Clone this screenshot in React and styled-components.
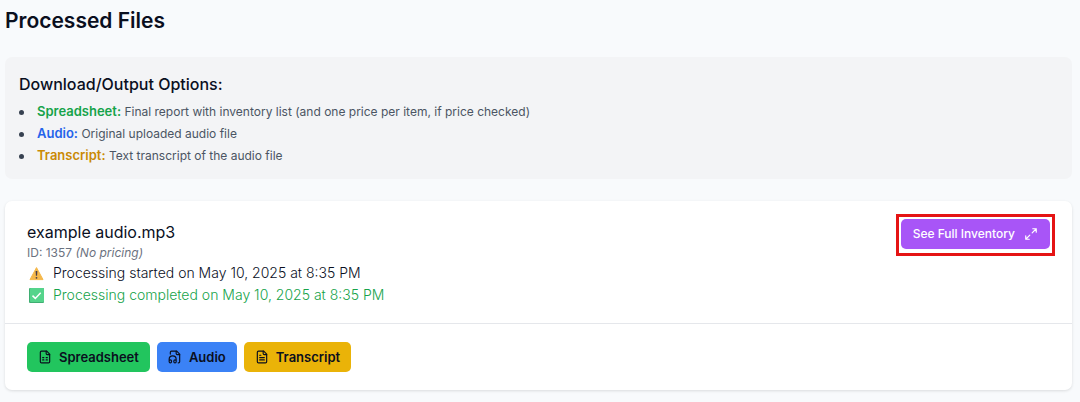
import React from "react";
import styled, { createGlobalStyle } from "styled-components";

const GlobalStyle = createGlobalStyle`
  *, *::before, *::after { box-sizing: border-box; }
  body {
    margin: 0;
    background: #f8fafc;
    color: #0a0f1e;
    font-family: Inter, "Liberation Sans", sans-serif;
    font-size: 14px;
    line-height: 22px;
  }
  h1, h2, h3, p, ul { margin: 0; }
`;

const Page = styled.main`
  padding: 8px 8px 12px 5px;
`;

const PageTitle = styled.h1`
  font-size: 21px;
  font-weight: 600;
  line-height: 26px;
  margin-bottom: 23px;
`;

const OptionsPanel = styled.section`
  background: #f3f4f6;
  border-radius: 7px;
  padding: 14px 14px 12px;
  margin-bottom: 22px;
`;

const OptionsTitle = styled.h2`
  font-size: 16px;
  font-weight: 500;
  line-height: 26px;
  margin-bottom: 4px;
`;

const OptionsList = styled.ul`
  list-style: none;
  padding: 0;
  color: #4b5563;
`;

const Option = styled.li`
  display: flex;
  align-items: center;
  font-size: 12px;
  line-height: 22px;
  &::before {
    content: "";
    width: 5px;
    height: 5px;
    margin-right: 13px;
    border-radius: 50%;
    background: #374151;
  }
`;

const OptionName = styled.strong`
  font-size: 13px;
  font-weight: 600;
  line-height: 16px;
  color: ${(p) => p.$color};
`;

const Card = styled.article`
  background: #fff;
  border-radius: 7px;
  box-shadow: 0 1px 3px rgba(0, 0, 0, 0.12);
`;

const CardHeader = styled.header`
  display: flex;
  justify-content: space-between;
  align-items: flex-start;
  padding: 13px 17px 17px 22px;
  border-bottom: 1px solid #e5e7eb;
`;

const FileInfo = styled.div`
  padding-top: 7px;
`;

const FileName = styled.h3`
  font-size: 16px;
  font-weight: 400;
  line-height: 22px;
`;

const FileMeta = styled.p`
  font-size: 12px;
  line-height: 19px;
  color: #6b7280;
`;

const StatusLine = styled.p`
  display: flex;
  align-items: center;
  gap: 9px;
  font-weight: 300;
  color: ${(p) => p.$color};
  svg { margin-left: 2px; }
`;

const Highlight = styled.div`
  border: 3px solid #e51414;
  padding: 2px 2px 4px;
`;

const Button = styled.button`
  display: inline-flex;
  align-items: center;
  gap: 7px;
  height: 30px;
  padding: 0 11px;
  border: 0;
  border-radius: 5px;
  font: 600 13px/20px Inter, "Liberation Sans", sans-serif;
  color: #0a0f1e;
  background: ${(p) => p.$bg};
  white-space: nowrap;
  cursor: pointer;
`;

const InventoryButton = styled(Button)`
  gap: 9px;
  padding: 0 12px;
  font-size: 12px;
  font-weight: 500;
  color: #fff;
`;

const CardActions = styled.footer`
  display: flex;
  gap: 7px;
  padding: 18px 22px;
`;

const Icon = ({ children }) => (
  <svg width="14" height="14" viewBox="0 0 24 24" fill="none" stroke="currentColor" strokeWidth="2" strokeLinecap="round" strokeLinejoin="round" aria-hidden="true">
    {children}
  </svg>
);

const FileOutline = () => (
  <>
    <path d="M15 2H6a2 2 0 0 0-2 2v16a2 2 0 0 0 2 2h12a2 2 0 0 0 2-2V7Z" />
    <path d="M14 2v4a2 2 0 0 0 2 2h4" />
  </>
);

const SheetIcon = () => (
  <Icon>
    <FileOutline />
    <path d="M8 13h2M14 13h2M8 17h2M14 17h2" />
  </Icon>
);

const AudioIcon = () => (
  <Icon>
    <path d="M17.5 22h.5a2 2 0 0 0 2-2V7l-5-5H6a2 2 0 0 0-2 2v3" />
    <path d="M14 2v4a2 2 0 0 0 2 2h4" />
    <path d="M2 19a2 2 0 1 1 4 0v1a2 2 0 1 1-4 0v-4a6 6 0 0 1 12 0v4a2 2 0 1 1-4 0v-1a2 2 0 1 1 4 0" />
  </Icon>
);

const TextIcon = () => (
  <Icon>
    <FileOutline />
    <path d="M10 9H8M16 13H8M16 17H8" />
  </Icon>
);

const ExpandIcon = () => (
  <Icon>
    <path d="M15 3h6v6M21 3l-7 7M3 21l7-7M9 21H3v-6" />
  </Icon>
);

const WarningIcon = () => (
  <svg width="15" height="15" viewBox="0 0 15 15" aria-hidden="true">
    <path d="M7.5 1.6 14 13.6H1Z" fill="#f5b84b" stroke="#f5b84b" strokeWidth="1" strokeLinejoin="round" />
    <path d="M6.6 5h1.8L8.1 9.8H6.9Z" fill="#4a3d48" />
    <circle cx="7.5" cy="11.8" r="0.9" fill="#4a3d48" />
  </svg>
);

const CheckIcon = () => (
  <svg width="15" height="15" viewBox="0 0 15 15" aria-hidden="true">
    <rect width="15" height="15" rx="1" fill="#3fae72" />
    <rect x="1" width="14" height="14" rx="1" fill="#55d48b" />
    <path d="m3.5 7.6 2.8 2.8 5.4-5.6" fill="none" stroke="#fff" strokeWidth="1.5" />
  </svg>
);

const options = [
  { name: "Spreadsheet:", color: "#16a34a", text: "Final report with inventory list (and one price per item, if price checked)" },
  { name: "Audio:", color: "#2563eb", text: "Original uploaded audio file" },
  { name: "Transcript:", color: "#ca8a04", text: "Text transcript of the audio file" },
];

export default function App() {
  return (
    <>
      <GlobalStyle />
      <Page>
        <PageTitle>Processed Files</PageTitle>
        <OptionsPanel>
          <OptionsTitle>Download/Output Options:</OptionsTitle>
          <OptionsList>
            {options.map((o) => (
              <Option key={o.name}>
                <p>
                  <OptionName $color={o.color}>{o.name}</OptionName> {o.text}
                </p>
              </Option>
            ))}
          </OptionsList>
        </OptionsPanel>
        <Card>
          <CardHeader>
            <FileInfo>
              <FileName>example audio.mp3</FileName>
              <FileMeta>ID: 1357 <em>(No pricing)</em></FileMeta>
              <StatusLine><WarningIcon />Processing started on May 10, 2025 at 8:35 PM</StatusLine>
              <StatusLine $color="#16a34a"><CheckIcon />Processing completed on May 10, 2025 at 8:35 PM</StatusLine>
            </FileInfo>
            <Highlight>
              <InventoryButton type="button" $bg="#a855f7">See Full Inventory <ExpandIcon /></InventoryButton>
            </Highlight>
          </CardHeader>
          <CardActions>
            <Button type="button" $bg="#22c55e"><SheetIcon />Spreadsheet</Button>
            <Button type="button" $bg="#3b82f6"><AudioIcon />Audio</Button>
            <Button type="button" $bg="#eab308"><TextIcon />Transcript</Button>
          </CardActions>
        </Card>
      </Page>
    </>
  );
}
